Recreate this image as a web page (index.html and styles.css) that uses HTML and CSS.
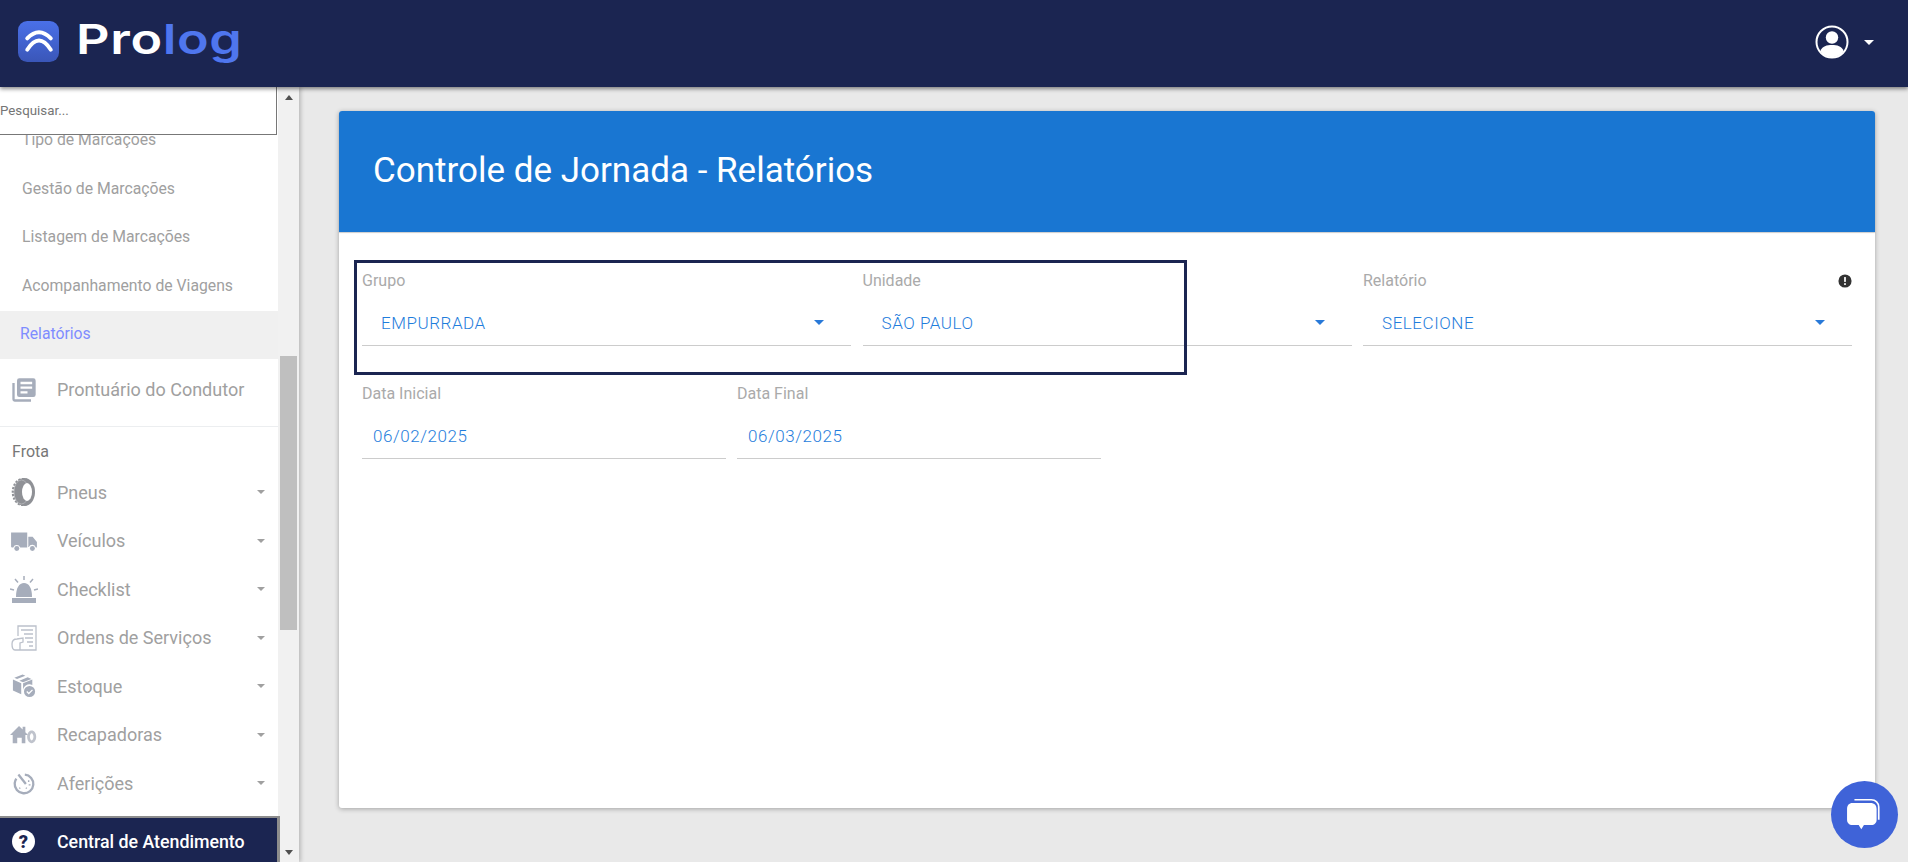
FILE: index.html
```html
<!DOCTYPE html>
<html lang="pt-BR">
<head>
<meta charset="utf-8">
<title>Prolog</title>
<link rel="stylesheet" href="styles.css">
</head>
<body>
<header class="topbar">
  <div class="brand">
    <svg class="brand-mark" viewBox="0 0 40 40"><defs><linearGradient id="bm" x1="0" y1="0" x2="0" y2="1"><stop offset="0" stop-color="#4a70e8"/><stop offset="1" stop-color="#3a56b8"/></linearGradient></defs><rect width="40" height="40" rx="9" fill="url(#bm)"/><path d="M9 17 Q20.500 5 32 17" fill="none" stroke="#fff" stroke-width="3.800" stroke-linecap="round"/><path d="M9 28 Q20.500 10 32 28" fill="none" stroke="#fff" stroke-width="3.800" stroke-linecap="round"/></svg>
    <span class="brand-text">Pro<span class="brand-accent">log</span></span>
  </div>
  <div class="user">
    <svg class="user-icon" viewBox="0 0 34 34"><circle cx="17" cy="17" r="15.500" fill="none" stroke="#fff" stroke-width="2"/><circle cx="17" cy="12.500" r="6.200" fill="#fff"/><path d="M5.500 26 C7 21 12 20 17 20 C22 20 27 21 28.500 26 C26 30 21.500 32 17 32 C12.500 32 8 30 5.500 26Z" fill="#fff"/></svg>
    <span class="caret caret-white"></span>
  </div>
</header>
<div class="shell">
  <aside class="sidebar">
    <div class="nav">
      <input class="search" type="text" placeholder="Pesquisar...">
      <ul class="sub">
        <li class="sub-item">Tipo de Marcações</li>
        <li class="sub-item">Gestão de Marcações</li>
        <li class="sub-item">Listagem de Marcações</li>
        <li class="sub-item">Acompanhamento de Viagens</li>
        <li class="sub-item sub-active">Relatórios</li>
      </ul>
      <div class="item item-single">
        <svg class="ico" viewBox="0 0 24 24"><path d="M2 6h2v14h14v2H4a2 2 0 0 1-2-2z" fill="#a6adbb"/><path fill-rule="evenodd" d="M8 2h12a2 2 0 0 1 2 2v12a2 2 0 0 1-2 2H8a2 2 0 0 1-2-2V4a2 2 0 0 1 2-2zm1 3v2h10V5zm0 4v2h10V9zm0 4v2h6v-2z" fill="#a6adbb"/></svg>
        <span class="item-label">Prontuário do Condutor</span>
      </div>
      <div class="section">Frota</div>
      <div class="item">
        <svg class="ico" viewBox="0 0 28 28"><ellipse cx="13" cy="14" rx="10" ry="12.800" fill="none" stroke="#8f9196" stroke-width="2.600" stroke-dasharray="2.200 1.300"/><ellipse cx="14.500" cy="14" rx="10.500" ry="14" fill="#8f9196"/><ellipse cx="11.500" cy="14" rx="7.500" ry="12" fill="none" stroke="#bcbdc1" stroke-width=".7"/><ellipse cx="17" cy="14" rx="5" ry="9" fill="#fff"/></svg>
        <span class="item-label">Pneus</span><span class="caret"></span>
      </div>
      <div class="item">
        <svg class="ico" viewBox="0 0 26 22"><path d="M1 3h15v14H9.500a3.500 3.500 0 0 0-6.500 0H2a1 1 0 0 1-1-1zM17 7h4l4 5v5h-1a3.500 3.500 0 0 0-6.500-.5H17z" fill="#a6adbb"/><circle cx="6.300" cy="18" r="2.300" fill="#a6adbb"/><circle cx="20.800" cy="18" r="2.300" fill="#a6adbb"/></svg>
        <span class="item-label">Veículos</span><span class="caret"></span>
      </div>
      <div class="item">
        <svg class="ico" viewBox="0 0 28 28"><path d="M6 22C6 13 9 8 14 8S22 13 22 22z" fill="#a6adbb"/><path d="M2 23h24v5H2z" fill="#a6adbb"/><path d="M14 1v4M5 4l3 3.500M23 4l-3 3.500M0 14l4 1M28 14l-4 1" stroke="#a6adbb" stroke-width="1.500" fill="none"/></svg>
        <span class="item-label">Checklist</span><span class="caret"></span>
      </div>
      <div class="item">
        <svg class="ico" viewBox="0 0 28 28"><path d="M8 12V2h18v24H9M11 6h12M14 10h9M15 14h8M17 18h6M19 22h4M2 20c0-3 2-5 5-5l6-1v4l-3 1v7H5c-2 0-3-2-3-6z" fill="none" stroke="#bcc1cb" stroke-width="1.300"/></svg>
        <span class="item-label">Ordens de Serviços</span><span class="caret"></span>
      </div>
      <div class="item">
        <svg class="ico ico-sm" viewBox="0 0 26 26"><path d="M1 6l9 4v12l-9-4zM2.500 4l9-3.500 3 1.400-9 3.600zM8 7.200l9-3.600 4 1.800-9 3.600-4-1.800zM12 10l10-4v6a7 7 0 0 0-10 7z" fill="#a6adbb"/><circle cx="19" cy="19" r="6" fill="#a6adbb"/><path d="M16 19l2.200 2.200 4-4" stroke="#fff" stroke-width="1.400" fill="none"/></svg>
        <span class="item-label">Estoque</span><span class="caret"></span>
      </div>
      <div class="item">
        <svg class="ico" viewBox="0 -3 31 28"><path d="M0 11L10 1l4 4V2h3v6l3 3h-3v9h-4v-6H8v6H3v-9z" fill="#aab0bd"/><path fill-rule="evenodd" d="M24 6c2.800 0 5 3 5 7s-2.200 7-5 7-5-3-5-7 2.200-7 5-7zm0 3c-1 0-2 2-2 4s1 4 2 4 2-2 2-4-1-4-2-4z" fill="#bfc3cc"/></svg>
        <span class="item-label">Recapadoras</span><span class="caret"></span>
      </div>
      <div class="item">
        <svg class="ico" viewBox="-2 -2 30 30"><circle cx="13" cy="14" r="10" fill="none" stroke="#a6adbb" stroke-width="2.500" stroke-dasharray="52 11" transform="rotate(-85 13 14)"/><path d="M7 4l8 10" stroke="#a6adbb" stroke-width="2.500" fill="none"/><path d="M18 10v2M20 15h-2M8 19l1-1M16 19l-1-1" stroke="#a6adbb" stroke-width="1.500"/></svg>
        <span class="item-label">Aferições</span><span class="caret"></span>
      </div>
    </div>
    <div class="help">
      <svg class="help-ico" viewBox="0 0 24 24"><circle cx="12" cy="12" r="12" fill="#fff"/><text x="12" y="18.500" text-anchor="middle" class="help-q">?</text></svg>
      <span>Central de Atendimento</span>
    </div>
    <div class="scrollbar">
      <span class="arrow arrow-up"></span>
      <div class="track"><div class="thumb"></div></div>
      <span class="arrow arrow-down"></span>
    </div>
  </aside>
  <main class="main">
    <section class="card">
      <div class="card-head"><h1>Controle de Jornada - Relatórios</h1></div>
      <div class="card-body">
        <div class="highlight"></div>
        <div class="row row-selects">
          <div class="field">
            <label>Grupo</label>
            <div class="control"><span>EMPURRADA</span><span class="caret caret-blue"></span></div>
          </div>
          <div class="field">
            <label>Unidade</label>
            <div class="control"><span>SÃO PAULO</span><span class="caret caret-blue"></span></div>
          </div>
          <div class="field">
            <div class="label-row"><label>Relatório</label>
              <svg class="info" viewBox="0 0 16 16"><circle cx="8" cy="8" r="7.500" fill="#333"/><rect x="7" y="3.500" width="2" height="5.500" fill="#fff"/><rect x="7" y="10.500" width="2" height="2" fill="#fff"/></svg>
            </div>
            <div class="control"><span>SELECIONE</span><span class="caret caret-blue"></span></div>
          </div>
        </div>
        <div class="row row-dates">
          <div class="field field-date">
            <label>Data Inicial</label>
            <div class="control control-date"><span>06/02/2025</span></div>
          </div>
          <div class="field field-date">
            <label>Data Final</label>
            <div class="control control-date"><span>06/03/2025</span></div>
          </div>
        </div>
      </div>
    </section>
  </main>
</div>
<button class="chat" type="button" aria-label="Chat">
  <svg viewBox="0 0 36 34"><path d="M8 3h16c4 0 7 3 7 7v12" fill="none" stroke="#fff" stroke-width="1.600"/><path d="M6 6h17c4 0 6 2 6 6v10c0 3-2 5-5 5h-7l-2.500 4-2.500-4H6c-3 0-5-2-5-5V12c0-4 2-6 5-6z" fill="#fff"/></svg>
</button>
</body>
</html>
```
FILE: styles.css
```css
* { box-sizing: border-box; }
html, body { margin: 0; height: 100%; }
body {
  font-family: Roboto, "Liberation Sans", sans-serif;
  background: #e9e9e9;
  overflow: hidden;
  position: relative;
}
ul { list-style: none; margin: 0; padding: 0; }

.topbar {
  height: 87px;
  background: #1b2551;
  display: flex;
  align-items: center;
  justify-content: space-between;
  padding: 0 34px 0 18px;
  position: relative;
  z-index: 3;
  box-shadow: 0 2px 4px rgba(0, 0, 0, .45);
}
.brand { display: flex; align-items: center; gap: 17px; }
.brand-mark { width: 41px; height: 41px; display: block; margin-top: -4px; }
.brand-text {
  font-family: Inter, sans-serif;
  font-size: 41px;
  font-weight: 600;
  line-height: 1;
  color: #fff;
  letter-spacing: .5px;
  margin-top: -8px;
  transform: scaleX(1.27);
  transform-origin: left center;
}
.brand-accent { color: #4f76ee; }
.user { display: flex; align-items: center; gap: 15px; margin-top: -3px; }
.user-icon { width: 34px; height: 34px; display: block; }

.caret {
  width: 0;
  height: 0;
  border-left: 4px solid transparent;
  border-right: 4px solid transparent;
  border-top: 4px solid #a0a0a0;
  flex: none;
}
.caret-white { border-left-width: 5px; border-right-width: 5px; border-top: 5px solid #fff; }
.caret-blue { border-left-width: 5px; border-right-width: 5px; border-top: 5px solid #2979d8; margin-top: -2px; }

.shell { display: flex; height: 775px; }

.sidebar {
  width: 299px;
  flex: none;
  background: #f1f1f1;
  position: relative;
  display: flex;
  flex-direction: column;
  box-shadow: 2px 0 4px rgba(0, 0, 0, .2);
  z-index: 2;
  overflow: hidden;
}
.nav {
  width: 278px;
  height: 775px;
  background: #fff;
  padding-top: 30px;
  color: #a0a0a0;
}
.search {
  position: absolute;
  top: 0;
  left: -1px;
  width: 278px;
  height: 48px;
  border: 1px solid #777;
  border-top: 0;
  background: #fff;
  font-family: Roboto, sans-serif;
  font-size: 13.300px;
  padding: 0;
  outline: 0;
  z-index: 1;
}
.search::placeholder { color: #757575; opacity: 1; }

.sub-item {
  height: 48.500px;
  padding-left: 22px;
  font-size: 15.750px;
  line-height: 45px;
  color: #a0a0a0;
}
.sub-active {
  padding-left: 20px;
  background: #f0f0f0;
  color: #7e8cff;
  height: 48px;
}
.item {
  height: 48.500px;
  display: flex;
  align-items: center;
  padding: 0 13px 0 0;
  position: relative;
}
.item-single { height: 68px; padding-bottom: 6px; border-bottom: 1px solid #eceef0; }
.ico {
  width: 28px;
  height: 28px;
  flex: none;
  margin: 0 19px 0 10px;
  display: block;
}
.ico-sm { width: 24px; height: 24px; margin: 0 21px 0 12px; }
.item-label { flex: 1; font-size: 18px; color: #a0a0a0; }
.section {
  height: 41px;
  padding: 15px 0 0 12px;
  font-size: 16px;
  color: #777;
}

.help {
  position: absolute;
  left: 0;
  bottom: -3px;
  width: 280px;
  height: 49px;
  background: #1b2551;
  border-top: 2px solid #8d8d8d;
  border-right: 3px solid #8d8d8d;
  display: flex;
  align-items: center;
  color: #fff;
  font-size: 17.800px;
  font-weight: 500;
  padding: 0 0 0 12px;
  gap: 22px;
}
.help-ico { width: 23px; height: 23px; flex: none; display: block; }
.help-q { font-family: Roboto, sans-serif; font-size: 19px; font-weight: 900; fill: #1b2551; }

.scrollbar {
  position: absolute;
  top: 0;
  left: 280px;
  width: 17px;
  height: 775px;
  display: flex;
  flex-direction: column;
  align-items: center;
}
.track { flex: 1; width: 100%; padding-top: 256px; }
.thumb { height: 274px; background: #bfbfbf; }
.arrow { width: 0; height: 0; border-left: 4.500px solid transparent; border-right: 4.500px solid transparent; flex: none; }
.arrow-up { border-bottom: 5px solid #505050; margin: 8px 0 0; }
.arrow-down { border-top: 5px solid #505050; margin: 0 0 7px; }

.main { flex: 1; padding: 24px 33px 0 40px; }
.card {
  height: 697px;
  background: #fff;
  border-radius: 3px;
  box-shadow: 0 1px 5px rgba(0, 0, 0, .3);
  display: flex;
  flex-direction: column;
}
.card-head {
  height: 121px;
  background: #1976d2;
  border-radius: 3px 3px 0 0;
  display: flex;
  align-items: center;
  padding: 0 0 2px 34px;
  box-shadow: 0 1px 1px rgba(0, 0, 0, .2);
}
.card-head h1 {
  margin: 0;
  font-size: 35px;
  font-weight: 400;
  color: #fff;
}
.card-body { flex: 1; position: relative; padding: 0 23px; }
.highlight {
  position: absolute;
  top: 28px;
  left: 15px;
  width: 833px;
  height: 115px;
  border: 3px solid #1b2551;
}
.row { display: flex; }
.row-selects { gap: 11.500px; padding-top: 39px; }
.row-dates { gap: 11px; padding-top: 38px; }
.field { flex: 1; min-width: 0; }
.field-date { flex: 0 0 364px; }
label {
  display: block;
  font-size: 16px;
  line-height: 20px;
  color: #aaa;
}
.label-row { display: flex; justify-content: space-between; align-items: center; height: 20px; }
.info { width: 14px; height: 14px; display: block; }
.control {
  height: 55px;
  border-bottom: 1px solid #ccc;
  display: flex;
  align-items: center;
  justify-content: space-between;
  padding: 10px 27px 0 19px;
  font-size: 17px;
  font-weight: 300;
  color: #1f7ddc;
  letter-spacing: .55px;
}
.control-date { padding: 10px 0 0 11px; }

.chat {
  position: absolute;
  left: 1831px;
  top: 781px;
  width: 67px;
  height: 67px;
  border-radius: 50%;
  border: 0;
  background: #3f63d8;
  z-index: 5;
  padding: 14px 14px 14px 15px;
}
.chat svg { width: 100%; height: 100%; display: block; }
```
